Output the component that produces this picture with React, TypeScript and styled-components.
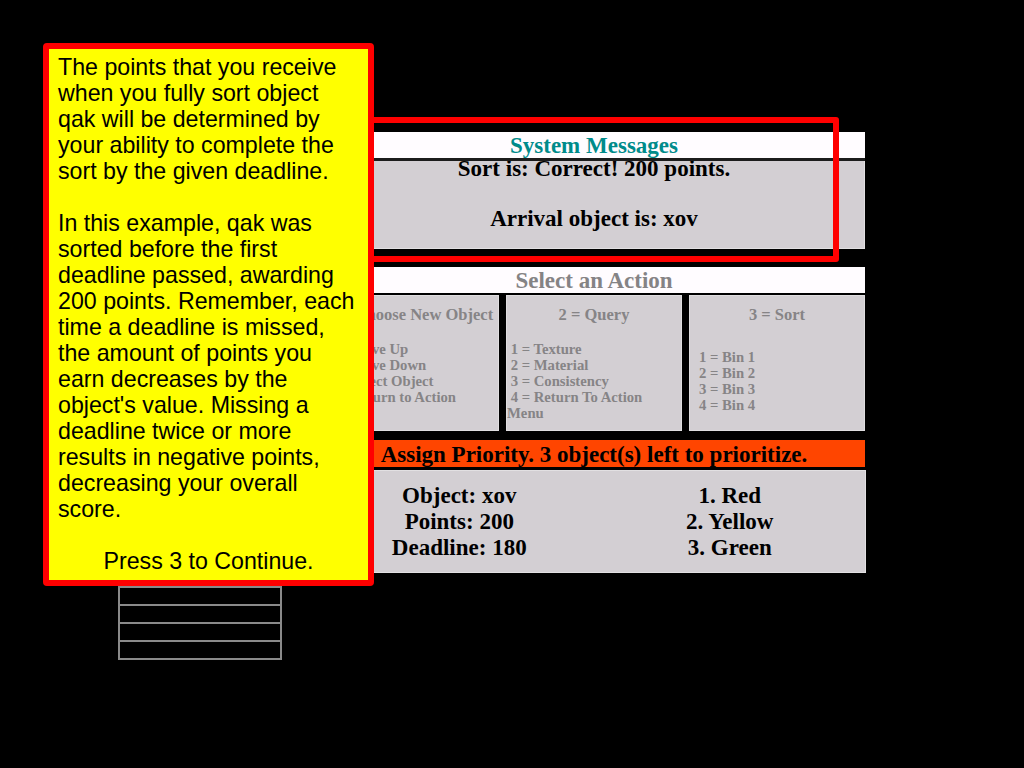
import React from "react";
import styled, { createGlobalStyle } from "styled-components";

const GlobalStyle = createGlobalStyle`
  html, body { margin: 0; padding: 0; background: #000; }
  body { font-family: "Liberation Serif", "Times New Roman", serif; }
  * { box-sizing: border-box; }
`;

const Stage = styled.div`
  position: relative;
  width: 1024px;
  height: 768px;
  overflow: hidden;
  background: #000;
  display: flex;
  align-items: flex-start;
  padding: 132px 0 0 118px;
`;

const ObjectTable = styled.div`
  width: 164px;
  margin-top: 4px;
  border: 1px solid #8a8a8a;
  display: flex;
  flex-direction: column;
`;

const TableRow = styled.div`
  height: 18px;
  border: 1px solid #8a8a8a;
`;

const Main = styled.div`
  width: 542px;
  margin-left: 41px;
  display: flex;
  flex-direction: column;
`;

const PanelHeader = styled.div<{ $color: string }>`
  height: 26px;
  padding-top: 1px;
  background: #fffcff;
  color: ${(p) => p.$color};
  font-weight: bold;
  font-size: 23px;
  line-height: 26px;
  text-align: center;
  white-space: nowrap;
  overflow: visible;
`;

const HeaderRule = styled.div<{ $h: number; $c: string }>`
  height: ${(p) => p.$h}px;
  background: ${(p) => p.$c};
  position: relative;
`;

const SysBody = styled.div`
  height: 88px;
  background: #d3cfd3;
  border: 1px solid #e2e0e2;
  border-top: none;
  text-align: center;
  font-weight: bold;
  font-size: 23px;
  line-height: 25px;
  color: #000;
`;

const SysText = styled.div`
  margin-top: -5px;
`;

const Spacer = styled.div<{ $h: number }>`
  height: ${(p) => p.$h}px;
`;

const ActionGrid = styled.div`
  display: grid;
  grid-template-columns: 176px 176px 176px;
  column-gap: 7px;
  height: 136px;
`;

const ActionCol = styled.div`
  background: #d3cfd3;
  border: 1px solid #e0dee0;
  display: flex;
  flex-direction: column;
  color: #868486;
  font-weight: bold;
  padding-top: 9px;
`;

const ColTitle = styled.div`
  font-size: 16.5px;
  line-height: 19px;
  text-align: center;
  white-space: nowrap;
`;

const ColItems = styled.div<{ $indent: number }>`
  flex: 1;
  margin-top: 7px;
  display: flex;
  flex-direction: column;
  justify-content: center;
  font-size: 14.7px;
  line-height: 16px;
  padding-left: ${(p) => p.$indent}px;
  padding-right: 4px;
`;

const PriorityBar = styled.div`
  height: 27px;
  padding-top: 2px;
  background: #ff4500;
  color: #000;
  font-weight: bold;
  font-size: 23px;
  line-height: 25px;
  text-align: center;
  white-space: nowrap;
`;

const InfoBody = styled.div`
  height: 103px;
  background: #d3cfd3;
  border: 1px solid #e2e0e2;
  margin-right: -1px;
  display: grid;
  grid-template-columns: 1fr 1fr;
  align-items: center;
  font-weight: bold;
  font-size: 23px;
  line-height: 26px;
  color: #000;
  text-align: center;
`;

const Highlight = styled.div`
  position: absolute;
  left: 330px;
  top: 117px;
  width: 509px;
  height: 145px;
  border: 6px solid #ff0000;
  border-radius: 3px;
`;

const Popup = styled.div`
  position: absolute;
  left: 43px;
  top: 43px;
  width: 331px;
  background: #ffff00;
  border: 6px solid #ff0000;
  border-radius: 4px;
  padding: 5px 9px 6px 9px;
  font-family: "Liberation Sans", Arial, sans-serif;
  font-size: 23.2px;
  line-height: 26px;
  color: #000;
`;

const PopupPara = styled.p<{ $center?: boolean }>`
  margin: 0 0 26px 0;
  text-align: ${(p) => (p.$center ? "center" : "left")};
  &:last-child { margin-bottom: 0; }
`;

const nb = "\u00a0";

const columns = [
  {
    title: "1 = Choose New Object",
    items: [nb + "1 = Move Up", nb + "2 = Move Down", nb + "3 = Select Object", nb + "4 = Return to Action Menu"],
    indent: 0,
  },
  {
    title: "2 = Query",
    items: [nb + "1 = Texture", nb + "2 = Material", nb + "3 = Consistency", nb + "4 = Return To Action Menu"],
    indent: 0,
  },
  {
    title: "3 = Sort",
    items: ["1 = Bin 1", "2 = Bin 2", "3 = Bin 3", "4 = Bin 4"],
    indent: 9,
  },
];

export default function App() {
  return (
    <>
      <GlobalStyle />
      <Stage>
        <ObjectTable>
          {Array.from({ length: 29 }).map((_, i) => (
            <TableRow key={i} />
          ))}
        </ObjectTable>
        <Main>
          <PanelHeader $color="#008b8b">System Messages</PanelHeader>
          <HeaderRule $h={3} $c="#1c1c1c" />
          <SysBody>
            <SysText>
              Sort is: Correct! 200 points.
              <br />
              <br />
              Arrival object is: xov
            </SysText>
          </SysBody>
          <Spacer $h={18} />
          <PanelHeader $color="#858385">Select an Action</PanelHeader>
          <HeaderRule $h={2} $c="#000" />
          <ActionGrid>
            {columns.map((c) => (
              <ActionCol key={c.title}>
                <ColTitle>{c.title}</ColTitle>
                <ColItems $indent={c.indent}>
                  {c.items.map((it) => (
                    <div key={it}>{it}</div>
                  ))}
                </ColItems>
              </ActionCol>
            ))}
          </ActionGrid>
          <Spacer $h={9} />
          <PriorityBar>Assign Priority. 3 object(s) left to prioritize.</PriorityBar>
          <HeaderRule $h={3} $c="#000" />
          <InfoBody>
            <div>
              Object: xov
              <br />
              Points: 200
              <br />
              Deadline: 180
            </div>
            <div>
              1. Red
              <br />
              2. Yellow
              <br />
              3. Green
            </div>
          </InfoBody>
        </Main>
        <Highlight />
        <Popup>
          <PopupPara>
            The points that you receive when you fully sort object qak will be determined by your ability to complete the sort by the given deadline.
          </PopupPara>
          <PopupPara>
            In this example, qak was sorted before the first deadline passed, awarding 200 points. Remember, each time a deadline is missed, the amount of points you earn decreases by the object's value. Missing a deadline twice or more results in negative points, decreasing your overall score.
          </PopupPara>
          <PopupPara $center>Press 3 to Continue.</PopupPara>
        </Popup>
      </Stage>
    </>
  );
}
